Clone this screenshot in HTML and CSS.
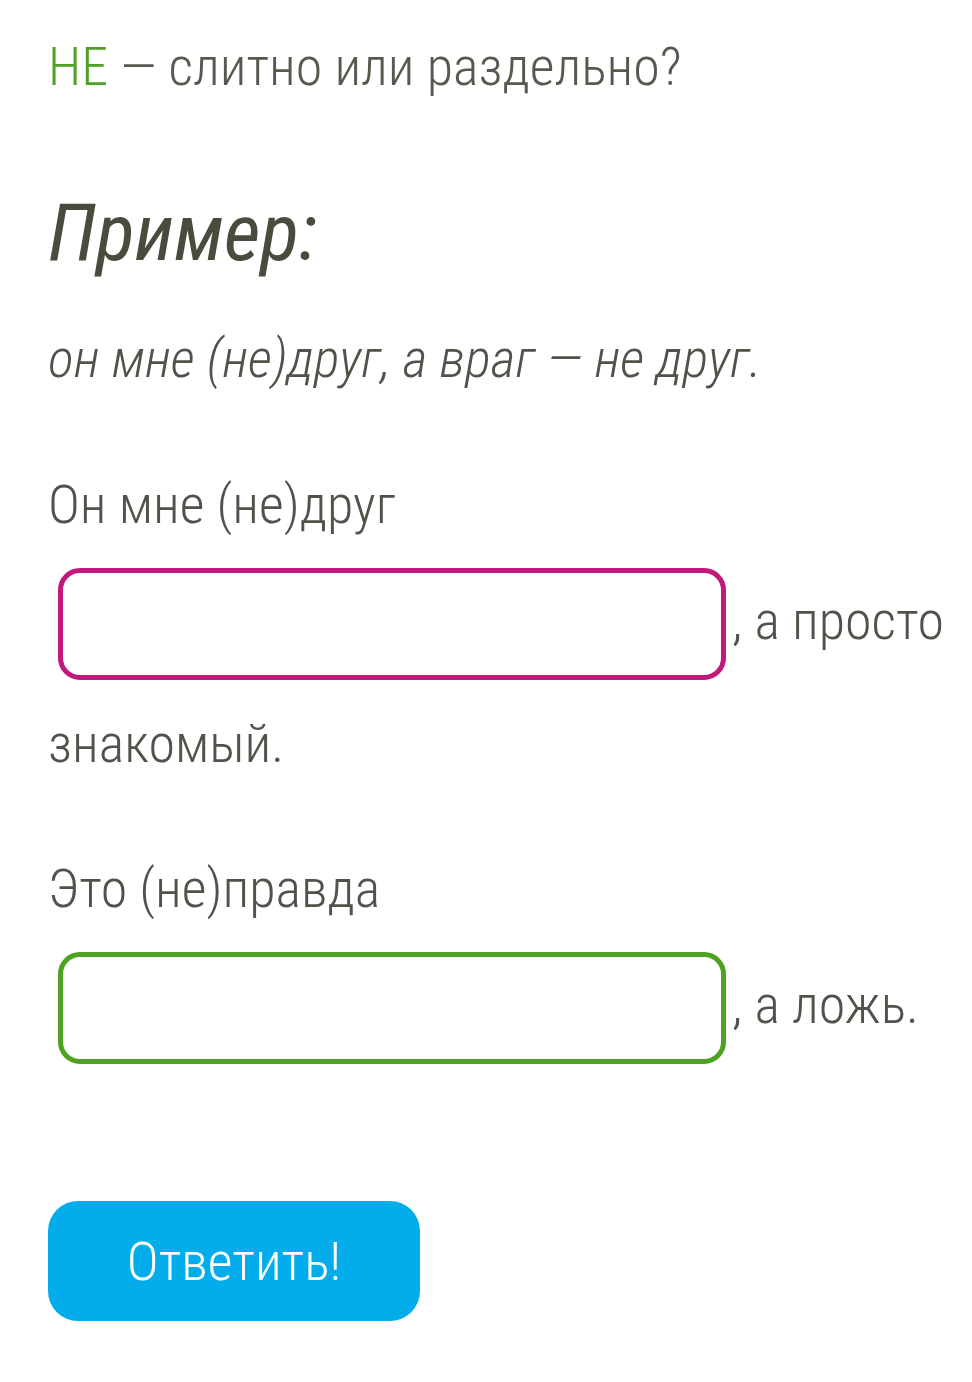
FILE: index.html
```html
<!DOCTYPE html>
<html lang="ru">
<head>
<meta charset="utf-8">
<title>НЕ — слитно или раздельно?</title>
<link rel="stylesheet" href="styles.css">
</head>
<body>
<main class="page">
  <h1 class="title"><span class="accent">НЕ</span> — слитно или раздельно?</h1>
  <h2 class="example-head">Пример:</h2>
  <p class="example">он мне (не)друг, а враг — не друг.</p>
  <p class="task">Он мне (не)друг <input class="answer answer-pink" type="text" aria-label="ответ 1">, а просто знакомый.</p>
  <p class="task">Это (не)правда <input class="answer answer-green" type="text" aria-label="ответ 2">, а ложь.</p>
  <button class="submit" type="button">Ответить!</button>
</main>
</body>
</html>
```

FILE: styles.css
```css
html, body {
  margin: 0;
  padding: 0;
  background: #ffffff;
}

.page {
  padding: 36px 0 40px 48px;
  font-family: "Roboto Condensed Light", "Roboto Condensed", "Liberation Sans Narrow", Roboto, sans-serif;
  font-stretch: condensed;
  font-weight: 300;
  color: #52524a;
}

.title {
  margin: 0;
  font-size: 54px;
  line-height: 62px;
  font-weight: 300;
  color: #58584f;
}

.accent {
  color: #50a028;
}

.example-head {
  margin: 87px 0 0;
  font-family: "Roboto Condensed", sans-serif;
  font-size: 80px;
  line-height: 96px;
  font-style: italic;
  font-weight: 400;
  color: #4a4a3d;
}

.example {
  margin: 47px 0 0;
  font-size: 54px;
  line-height: 62px;
  font-style: italic;
  font-weight: 300;
}

.task {
  margin: 84px 0 0;
  font-size: 54px;
  line-height: 62px;
}

.task + .task {
  margin-top: 83px;
}

.answer {
  box-sizing: border-box;
  width: 668px;
  height: 112px;
  margin: 32px 6px 33px 10px;
  vertical-align: middle;
  border: 5px solid;
  border-radius: 22px;
  background: #fff;
  outline: none;
  font: inherit;
  padding: 0 16px;
}

.answer-pink {
  border-color: #c2177b;
}

.answer-green {
  border-color: #4ea221;
}

.submit {
  display: block;
  margin: 104px 0 0 0;
  width: 372px;
  height: 120px;
  border: none;
  border-radius: 30px;
  background: #03adec;
  color: #ffffff;
  font-family: inherit;
  font-stretch: condensed;
  font-weight: 300;
  font-size: 54px;
  cursor: pointer;
}
```
